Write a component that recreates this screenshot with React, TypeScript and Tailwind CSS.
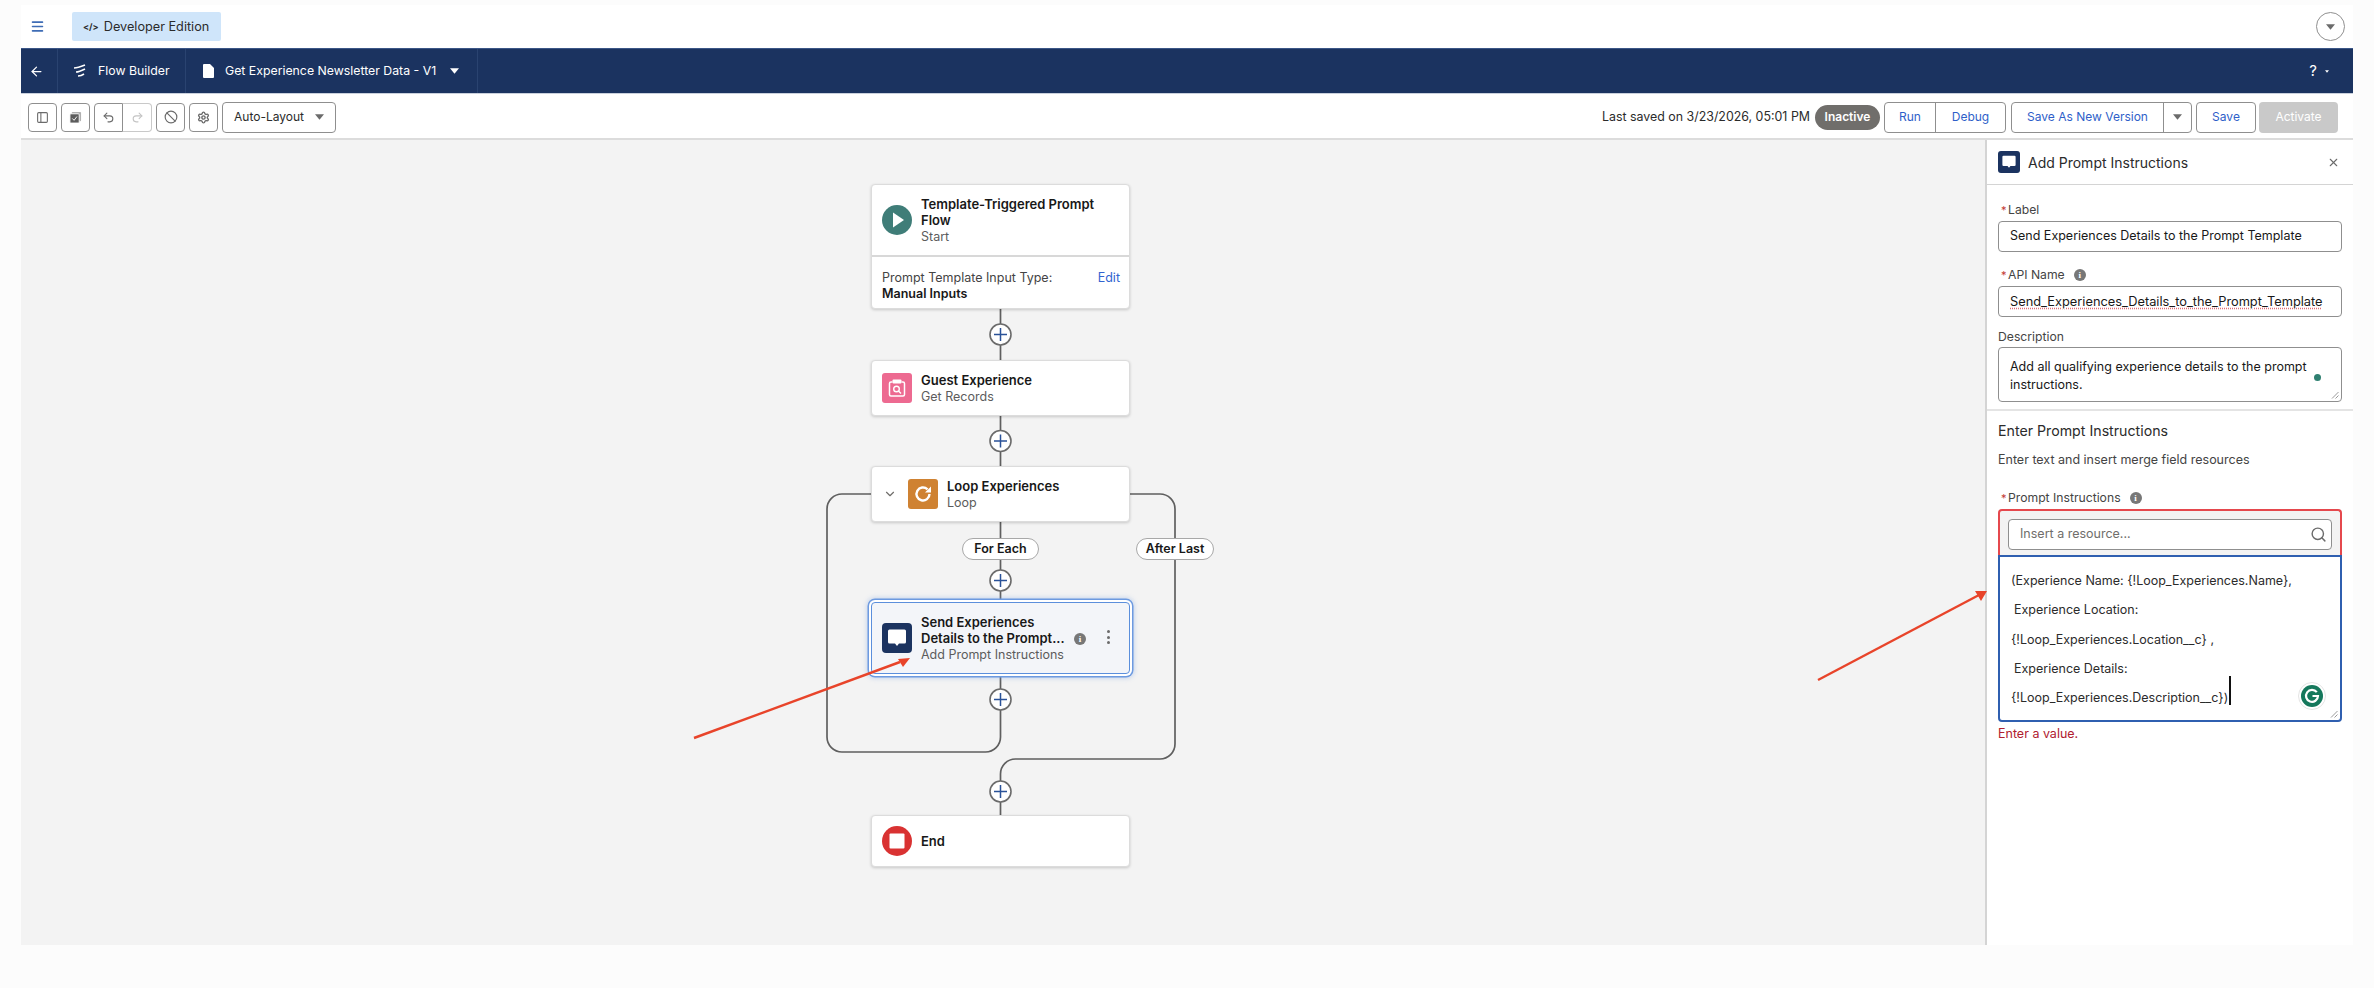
import * as React from 'react';
import { ArrowLeft, Ban, ChevronDown, Menu, PanelLeft, Redo2, Search, Settings, Undo2, X } from 'lucide-react';

const Caret: React.FC<{ className?: string }> = ({ className }) => (
    <svg viewBox="0 0 10 6" className={className}><path d="M0 0h10L5 6z" fill="currentColor" /></svg>
);

const ChatIcon: React.FC<{ className?: string }> = ({ className }) => (
    <svg viewBox="0 0 30 30" className={className}>
        <rect width="30" height="30" rx="4" fill="#1b3360" />
        <path d="M7.5 6.5h15a1.5 1.5 0 0 1 1.5 1.5v11a1.5 1.5 0 0 1-1.5 1.5h-5.5l-2 2.5-2-2.5H7.5A1.5 1.5 0 0 1 6 19V8a1.5 1.5 0 0 1 1.5-1.5z" fill="#fff" />
    </svg>
);

const ToolButton: React.FC<{ children: React.ReactNode; className?: string }> = ({ children, className = '' }) => (
    <div className={`flex items-center justify-center h-[29px] w-[29px] bg-white border border-[#8f8f8f] rounded-[4px] text-[#6b6b6b] ${className}`}>{children}</div>
);

const Plus: React.FC<{ x: number; y: number }> = ({ x, y }) => (
    <g transform={`translate(${x} ${y})`}>
        <circle r="10.5" fill="#fff" stroke="#6b6b6b" strokeWidth="1.6" />
        <path d="M-6.5 0H6.5M0-6.5V6.5" stroke="#2a5298" strokeWidth="1.5" />
    </g>
);

const NodeText: React.FC<{ title: React.ReactNode; sub?: string }> = ({ title, sub }) => (
    <div className="leading-[16px]">
        <div className="text-[13px] font-semibold text-[#181818]">{title}</div>
        {sub && <div className="text-[12.5px] text-[#5c5c5c] mt-[1px]">{sub}</div>}
    </div>
);

const cardClass = 'absolute left-[850px] w-[259px] bg-white border border-[#dcdcdc] rounded-[4px] shadow-[0_1px_3px_rgba(0,0,0,0.18)]';

const InfoDot: React.FC<{ className?: string }> = ({ className = '' }) => (
    <span className={`flex items-center justify-center w-[12px] h-[12px] rounded-full bg-[#777] text-white text-[9px] font-bold leading-none [font-family:'Liberation_Serif',serif] ${className}`}>i</span>
);

const FieldLabel: React.FC<{ text: string; info?: boolean; className?: string }> = ({ text, info, className = '' }) => (
    <div className={`flex items-center h-[16px] pl-[3px] text-[12.2px] text-[#444] ${className}`}>
        <span className="text-[#c23934] w-[7px] text-[11px]">*</span>
        <span>{text}</span>
        {info && <InfoDot className="ml-[9px]" />}
    </div>
);

const ResizeGrip: React.FC = () => (
    <svg viewBox="0 0 8 8" className="absolute right-[2px] bottom-[2px] w-[8px] h-[8px]">
        <path d="M1 7.5 7.5 1M4.5 7.5l3-3" stroke="#8f8f8f" strokeWidth="0.9" />
    </svg>
);

const FlowCanvas: React.FC = () => (
    <div className="relative w-[1964px] h-full bg-[#f3f3f3] overflow-hidden">
        <svg className="absolute inset-0" width="1964" height="805" fill="none">
            <g transform="translate(-21 -140)">
                <g stroke="#5f5f5f" strokeWidth="1.7">
                    <path d="M1000.5 309V360M1000.5 416V466M1000.5 522V600" />
                    <path d="M1000.5 677V737a15 15 0 0 1-15 15H842a15 15 0 0 1-15-15V509a15 15 0 0 1 15-15h29" />
                    <path d="M1130 494h30a15 15 0 0 1 15 15V744a15 15 0 0 1-15 15H1015.5a15 15 0 0 0-15 15V815" />
                </g>
                <Plus x={1000.5} y={334.5} />
                <Plus x={1000.5} y={441} />
                <Plus x={1000.5} y={580.5} />
                <Plus x={1000.5} y={699.5} />
                <Plus x={1000.5} y={791.5} />
            </g>
        </svg>

        <div className={`${cardClass} top-[44px] h-[125px]`}>
            <div className="flex items-center gap-[9px] h-[72px] px-[10px] border-b-2 border-[#d8d8d8]">
                <svg viewBox="0 0 30 30" className="w-[30px] h-[30px] shrink-0">
                    <circle cx="15" cy="15" r="15" fill="#3f7d78" />
                    <path d="M11 7.5 22 15 11 22.5z" fill="#fff" />
                </svg>
                <NodeText title={<>Template-Triggered Prompt<br />Flow</>} sub="Start" />
            </div>
            <div className="relative px-[10px] pt-[13px] text-[12.5px] leading-[16px] text-[#444]">
                <div>Prompt Template Input Type:</div>
                <div className="font-semibold text-[#181818]">Manual Inputs</div>
                <span className="absolute right-[9px] top-[13px] text-[#3263d0]">Edit</span>
            </div>
        </div>

        <div className={`${cardClass} top-[220px] h-[56px] flex items-center gap-[9px] px-[10px]`}>
            <svg viewBox="0 0 30 30" className="w-[30px] h-[30px] shrink-0">
                <rect width="30" height="30" rx="3" fill="#ed6a91" />
                <path d="M10.5 9H9a1.5 1.5 0 0 0-1.5 1.5v11A1.5 1.5 0 0 0 9 23h12a1.5 1.5 0 0 0 1.5-1.5v-11A1.5 1.5 0 0 0 21 9h-1.5" stroke="#fff" strokeWidth="1.5" fill="none" />
                <rect x="10.5" y="6.5" width="9" height="4" rx="1" fill="#fff" />
                <circle cx="14.5" cy="16" r="2.8" stroke="#fff" strokeWidth="1.4" fill="none" />
                <path d="M16.5 18l2.5 2.5" stroke="#fff" strokeWidth="1.4" />
            </svg>
            <NodeText title="Guest Experience" sub="Get Records" />
        </div>

        <div className={`${cardClass} top-[326px] h-[56px] flex items-center pl-[11px]`}>
            <ChevronDown className="w-[14px] h-[14px] text-[#706e6b] shrink-0" />
            <svg viewBox="0 0 30 30" className="w-[30px] h-[30px] shrink-0 ml-[11px] mr-[9px]">
                <rect width="30" height="30" rx="3" fill="#cf8232" />
                <path d="M21.5 15a6.5 6.5 0 1 1-2-4.7" stroke="#fff" strokeWidth="2.4" fill="none" />
                <path d="M23 7.5v6h-6z" fill="#fff" />
            </svg>
            <NodeText title="Loop Experiences" sub="Loop" />
        </div>

        <div className="absolute left-[941px] top-[398px] w-[77px] h-[22px] flex items-center justify-center bg-white border border-[#a8a8a8] rounded-full text-[12.5px] font-semibold text-[#181818]">For Each</div>
        <div className="absolute left-[1115px] top-[398px] w-[78px] h-[22px] flex items-center justify-center bg-white border border-[#a8a8a8] rounded-full text-[12.5px] font-semibold text-[#181818]">After Last</div>

        <div className="absolute left-[850px] top-[462px] w-[259px] h-[72px] flex items-center gap-[9px] pl-[10px] bg-[#f3f5f9] border border-[#5b8fdc] rounded-[4px] shadow-[0_0_0_2px_#fff,0_0_0_3.5px_#6d9ae0,0_0_5px_4px_rgba(109,154,224,0.4)]">
            <ChatIcon className="w-[30px] h-[30px] shrink-0" />
            <NodeText title={<>Send Experiences<br />Details to the Prompt...</>} sub="Add Prompt Instructions" />
            <InfoDot className="absolute left-[202px] top-[30px]" />
            <span className="absolute left-[235px] top-[27px] flex flex-col gap-[2.5px]">
                <i className="w-[3px] h-[3px] rounded-full bg-[#6b6b6b]" />
                <i className="w-[3px] h-[3px] rounded-full bg-[#6b6b6b]" />
                <i className="w-[3px] h-[3px] rounded-full bg-[#6b6b6b]" />
            </span>
        </div>

        <div className={`${cardClass} top-[675px] h-[52px] flex items-center gap-[9px] px-[10px]`}>
            <svg viewBox="0 0 30 30" className="w-[30px] h-[30px] shrink-0">
                <circle cx="15" cy="15" r="15" fill="#d93232" />
                <rect x="7.5" y="7.5" width="15" height="15" rx="1" fill="#fff" />
            </svg>
            <NodeText title="End" />
        </div>
    </div>
);

const PromptPanel: React.FC = () => (
    <div className="w-[368px] h-full bg-white border-l-2 border-[#d4d4d4] text-[#181818]">
        <div className="flex items-center h-[45px] pl-[11px] pr-[13px] border-b border-[#d4d4d4]">
            <ChatIcon className="w-[22px] h-[22px]" />
            <span className="ml-[8px] text-[14px] text-[#2b2b2b]">Add Prompt Instructions</span>
            <X className="ml-auto w-[13px] h-[13px] text-[#6b6b6b]" />
        </div>
        <div className="pl-[11px]">
            <FieldLabel text="Label" className="mt-[17px]" />
            <div className="mt-[3px] w-[344px] h-[31px] flex items-center pl-[11px] border border-[#8f8f8f] rounded-[4px] text-[12.5px]">Send Experiences Details to the Prompt Template</div>
            <FieldLabel text="API Name" info className="mt-[15px]" />
            <div className="mt-[3px] w-[344px] h-[31px] flex items-center pl-[11px] border border-[#8f8f8f] rounded-[4px] text-[12.8px]">
                <span className="underline decoration-dotted decoration-[#e0707a] underline-offset-2">Send_Experiences_Details_to_the_Prompt_Template</span>
            </div>
            <div className="mt-[12px] h-[16px] flex items-center text-[12.2px] text-[#444]">Description</div>
            <div className="relative mt-[2px] w-[344px] h-[55px] pl-[11px] pt-[10px] border border-[#8f8f8f] rounded-[4px] text-[12.5px] leading-[18px]">
                Add all qualifying experience details to the prompt instructions.
                <span className="absolute left-[315px] top-[26px] w-[7px] h-[7px] rounded-full bg-[#2f8071]" />
                <ResizeGrip />
            </div>
        </div>
        <div className="mt-[7px] h-[2px] bg-[#e4e4e4]" />
        <div className="pl-[11px]">
            <div className="mt-[10px] text-[14.2px] leading-[20px] text-[#2b2b2b]">Enter Prompt Instructions</div>
            <div className="mt-[11px] text-[12.5px] leading-[16px] text-[#444]">Enter text and insert merge field resources</div>
            <FieldLabel text="Prompt Instructions" info className="mt-[22px]" />
            <div className="mt-[3px] w-[344px] h-[46px] px-[8px] pt-[8px] bg-[#f3f3f3] border-2 border-b-0 border-[#e5484d] rounded-t-[4px]">
                <div className="relative h-[31px] flex items-center pl-[11px] bg-white border border-[#8f8f8f] rounded-[4px] text-[12.5px] text-[#706e6b]">
                    Insert a resource...
                    <Search className="absolute right-[4px] top-[6px] w-[17px] h-[17px] text-[#6b6b6b]" />
                </div>
            </div>
            <div className="relative w-[344px] h-[167px] pl-[11px] pt-[9px] border-2 border-[#2f5fb0] rounded-b-[4px] text-[12.5px] leading-[29.25px] text-[#2b2b2b]">
                <div>(Experience Name: {'{'}!Loop_Experiences.Name{'}'},</div>
                <div className="pl-[3px]">Experience Location:</div>
                <div>{'{'}!Loop_Experiences.Location__c{'}'} ,</div>
                <div className="pl-[3px]">Experience Details:</div>
                <div>{'{'}!Loop_Experiences.Description__c{'}'})</div>
                <span className="absolute left-[229px] top-[119px] w-[1.5px] h-[29px] bg-[#111]" />
                <svg viewBox="0 0 28 28" className="absolute left-[298px] top-[125px] w-[28px] h-[28px]">
                    <circle cx="14" cy="14" r="13.5" fill="#fff" stroke="#e4e4e4" />
                    <circle cx="14" cy="14" r="11" fill="#15785c" />
                    <path d="M18.8 10.2A6 6 0 1 0 20 14h-5.5" stroke="#fff" strokeWidth="2.2" fill="none" />
                </svg>
                <ResizeGrip />
            </div>
            <div className="mt-[4px] text-[12.5px] leading-[16px] text-[#b0202f]">Enter a value.</div>
        </div>
    </div>
);

const App: React.FC = () => (
    <div className="relative w-[2374px] h-[988px] bg-[#fcfcfc] pt-[5px] pl-[21px] overflow-hidden [font-family:Inter,sans-serif]">
        <div className="w-[2332px] h-[940px] flex flex-col">
            <div className="flex items-center h-[43px] shrink-0 bg-white pl-[9px] pr-[8px]">
                <Menu className="w-[15px] h-[15px] text-[#3e6cb5]" strokeWidth={2.5} />
                <div className="ml-[27px] flex items-center h-[29px] w-[149px] pl-[11px] gap-[5px] bg-[#cfe5fa] rounded-[2px] text-[12.7px] text-[#2b2b2b]">
                    <span className="text-[9px] font-bold">&lt;/&gt;</span>
                    <span>Developer Edition</span>
                </div>
                <div className="ml-auto flex items-center justify-center w-[29px] h-[29px] border border-[#8f8f8f] rounded-full bg-white text-[#6b6b6b]">
                    <Caret className="w-[9px] h-[6px]" />
                </div>
            </div>

            <div className="flex items-center h-[45px] shrink-0 bg-[#1b3360] text-white text-[12.3px] border-t border-[#3b5687]">
                <div className="flex items-center h-full w-[37px] pl-[8px] border-r border-[#2a4370]">
                    <ArrowLeft className="w-[15px] h-[15px]" strokeWidth={2} />
                </div>
                <div className="flex items-center h-full w-[128px] pl-[15px] gap-[11px] border-r border-[#2a4370]">
                    <svg viewBox="0 0 14 14" className="w-[14px] h-[14px]" fill="none" stroke="#fff" strokeWidth="1.6">
                        <path d="M1 4c3 0 6-1 11-3M3 8c3 0 5-1 9-3M5 12c2 0 4-.5 6-2" />
                    </svg>
                    <span>Flow Builder</span>
                </div>
                <div className="flex items-center h-full w-[292px] pl-[17px] border-r border-[#2a4370]">
                    <svg viewBox="0 0 11 14" className="w-[11px] h-[14px]"><path d="M1 0h6l4 4v9a1 1 0 0 1-1 1H1a1 1 0 0 1-1-1V1a1 1 0 0 1 1-1z" fill="#fff" /></svg>
                    <span className="ml-[11px]">Get Experience Newsletter Data - V1</span>
                    <Caret className="ml-[14px] w-[9px] h-[6px]" />
                </div>
                <div className="ml-auto flex items-center pr-[24px] gap-[8px]">
                    <span className="text-[15px]">?</span>
                    <Caret className="w-[4px] h-[3px]" />
                </div>
            </div>

            <div className="flex items-center h-[47px] shrink-0 bg-white pt-[2px] pl-[7px] pr-[15px] border-t border-[#c9d0dc] border-b-2 border-b-[#dcdcdc]">
                <ToolButton><PanelLeft className="w-[13px] h-[13px]" /></ToolButton>
                <ToolButton className="ml-[4px]">
                    <svg viewBox="0 0 14 14" className="w-[13px] h-[13px]"><rect x="3" y="1" width="10" height="10" rx="1" fill="#b0b0b0" /><rect x="1" y="3" width="10" height="10" rx="1" fill="#5c5c5c" stroke="#fff" /><path d="M3.5 8l2 2 3-4" stroke="#fff" fill="none" /></svg>
                </ToolButton>
                <div className="flex ml-[4px]">
                    <ToolButton className="rounded-r-none text-[#5c5c5c]"><Undo2 className="w-[13px] h-[13px]" /></ToolButton>
                    <ToolButton className="rounded-l-none border-l-0 border-[#c9c9c9] text-[#c4c4c4]"><Redo2 className="w-[13px] h-[13px]" /></ToolButton>
                </div>
                <ToolButton className="ml-[4px]"><Ban className="w-[14px] h-[14px]" /></ToolButton>
                <ToolButton className="ml-[4px]"><Settings className="w-[13px] h-[13px]" strokeWidth={2.6} /></ToolButton>
                <div className="ml-[4px] flex items-center justify-between w-[114px] h-[31px] px-[11px] bg-white border border-[#8f8f8f] rounded-[4px] text-[12px] text-[#2b2b2b]">
                    Auto-Layout
                    <Caret className="w-[9px] h-[6px] text-[#6b6b6b]" />
                </div>

                <span className="ml-auto text-[12.4px] text-[#2b2b2b]">Last saved on 3/23/2026, 05:01 PM</span>
                <span className="ml-[5px] flex items-center justify-center w-[65px] h-[25px] rounded-full bg-[#706e6b] text-white text-[12px] font-semibold">Inactive</span>
                <div className="ml-[4px] flex h-[31px] w-[122px] border border-[#8f8f8f] rounded-[4px] text-[12px] text-[#2f5fc9] bg-white">
                    <span className="flex items-center justify-center w-[51px] border-r border-[#8f8f8f]">Run</span>
                    <span className="flex-1 flex items-center justify-center">Debug</span>
                </div>
                <div className="ml-[5px] flex h-[31px] w-[181px] border border-[#8f8f8f] rounded-[4px] text-[12px] text-[#2f5fc9] bg-white">
                    <span className="flex items-center justify-center w-[152px] border-r border-[#8f8f8f]">Save As New Version</span>
                    <span className="flex-1 flex items-center justify-center text-[#6b6b6b]"><Caret className="w-[9px] h-[6px]" /></span>
                </div>
                <div className="ml-[4px] flex items-center justify-center w-[60px] h-[31px] border border-[#8f8f8f] rounded-[4px] text-[12px] text-[#2f5fc9] bg-white">Save</div>
                <div className="ml-[3px] flex items-center justify-center w-[79px] h-[31px] rounded-[4px] text-[12px] text-white bg-[#c9c9c9]">Activate</div>
            </div>

            <div className="flex flex-1 min-h-0">
                <FlowCanvas />
                <PromptPanel />
            </div>
        </div>

        {/* red annotation arrows drawn over the screenshot */}
        <svg className="absolute inset-0 pointer-events-none" width="2374" height="988">
            <path d="M694 738 900 662" stroke="#e8442a" strokeWidth="2.4" />
            <path d="M910 658 898 659 903 667z" fill="#e8442a" />
            <path d="M1818 680 1979 595" stroke="#e8442a" strokeWidth="2.4" />
            <path d="M1987 591 1975 591 1981 601z" fill="#e8442a" />
        </svg>
    </div>
);

export default App;
